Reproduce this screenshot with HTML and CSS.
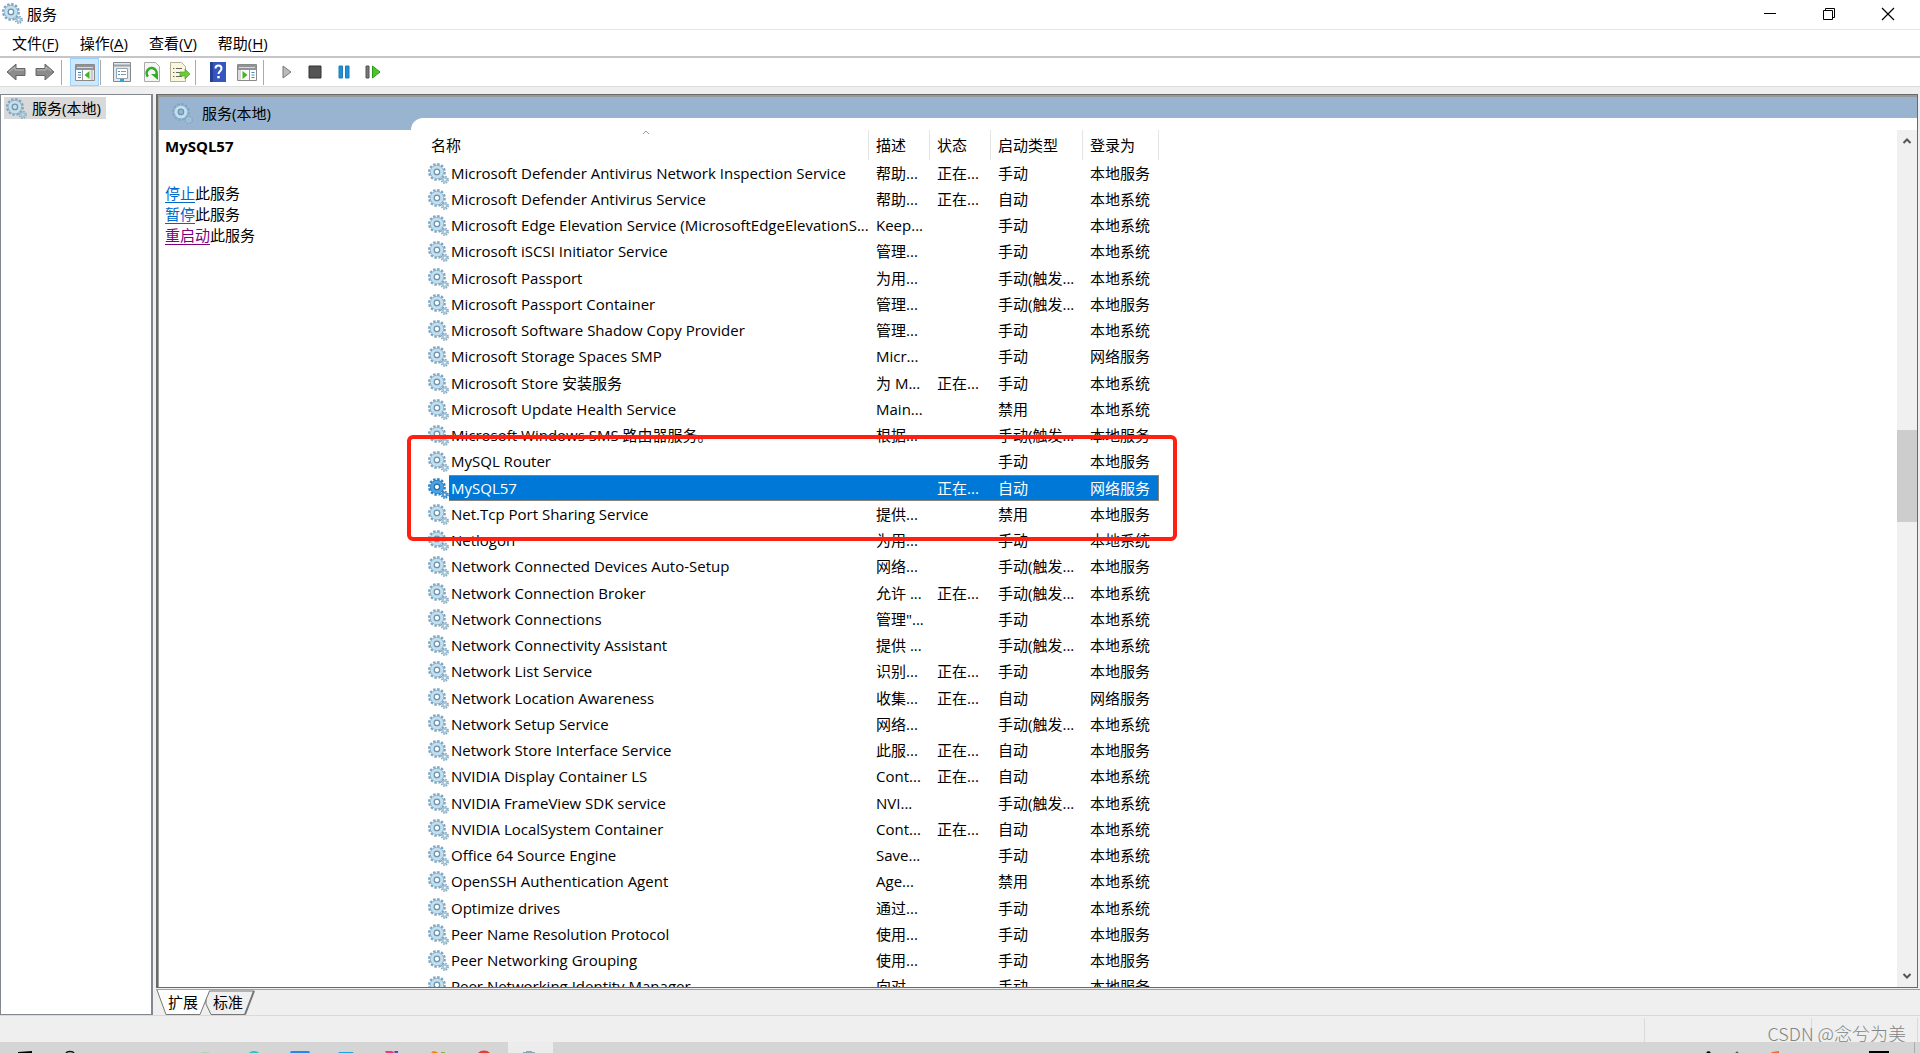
FILE: index.html
```html
<!DOCTYPE html>
<html lang="zh-CN">
<head>
<meta charset="utf-8">
<title>服务</title>
<link rel="stylesheet" href="styles.css">
</head>
<body>
<svg class="defs" aria-hidden="true">
  <symbol id="gear" viewBox="0 0 20 20">
    <circle class="g-teeth" cx="8.500" cy="8.500" r="7.300" fill="none" stroke-width="2.400" stroke-dasharray="2.300 1.522"/>
    <circle class="g-edge" cx="8.500" cy="8.500" r="4.500" fill="none" stroke-width="4.600"/>
    <circle class="g-body" cx="8.500" cy="8.500" r="4.300" fill="none" stroke-width="3.400"/>
    <circle class="g-ring" cx="8.500" cy="8.500" r="2.600" fill="none" stroke-width="1.200"/>
    <circle class="g-teeth" cx="16" cy="16" r="3.100" fill="none" stroke-width="1.600" stroke-dasharray="1.400 1.035"/>
    <circle class="g-small" cx="16" cy="16" r="1.800" fill="none" stroke-width="1.800"/>
  </symbol>
</svg>
<div class="window">
  <header class="titlebar">
    <svg class="gear"><use href="#gear"/></svg>
    <h1>服务</h1>
    <div class="winbtns">
      <button aria-label="最小化"><svg width="14" height="14"><path d="M1 6.500h12" stroke="#000"/></svg></button>
      <button aria-label="还原"><svg width="14" height="14" fill="none" stroke="#000"><path d="M1.500 3.500h9v9h-9zM3.500 3.500v-2h9v9h-2"/></svg></button>
      <button aria-label="关闭"><svg width="14" height="14" stroke="#000" stroke-width="1.200"><path d="M1 1l12 12M13 1L1 13"/></svg></button>
    </div>
  </header>
  <nav class="menubar">
    <button>文件(<u>F</u>)</button><button>操作(<u>A</u>)</button><button>查看(<u>V</u>)</button><button>帮助(<u>H</u>)</button>
  </nav>
  <div class="toolbar">
    <button class="t29" aria-label="后退"><svg width="20" height="18"><path d="M1 9L10 1v4.500h9v7h-9V17z" fill="#8b8b8b" stroke="#666"/><path d="M3 9l6-5v3h9" fill="none" stroke="#bbb"/></svg></button>
    <button class="t29" aria-label="前进"><svg width="20" height="18"><path d="M19 9L10 1v4.500H1v7h9V17z" fill="#8b8b8b" stroke="#666"/><path d="M2 7h9V4l5 4" fill="none" stroke="#bbb"/></svg></button>
    <i class="sep"></i>
    <button class="t29 on" aria-label="显示/隐藏控制台树"><svg width="20" height="18"><path d="M.5 1.500h19v16H.5z" fill="#fff" stroke="#8a8a8a"/><path d="M1 2h18v5H1z" fill="#8f9499"/><path d="M2 4.500h16" stroke="#d5d9dc"/><path d="M7.500 7v10" stroke="#999"/><path d="M3 9.500h3M3 12h3M3 14.500h3" stroke="#3f86c4"/><path d="M14.500 8v8L9.500 12z" fill="#42b521"/><path d="M15.500 7h3v10h-3z" fill="#ccc"/></svg></button>
    <i class="sep"></i>
    <button class="t33" aria-label="属性"><svg width="20" height="20"><path d="M1.500.500h17v19h-17z" fill="#e4e8eb" stroke="#83898f"/><path d="M2 3.500h16" stroke="#9aa0a5" stroke-width="2"/><path d="M4.500 6.500h11v10h-11z" fill="#fff" stroke="#92a5b3"/><path d="M6 9.500h2M6 12.500h2" stroke="#2f95d3"/><path d="M9 9.500h5M9 12.500h5" stroke="#8b969e"/><path d="M8 18h4" stroke="#24a7e0" stroke-width="2"/></svg></button>
    <button class="t28" aria-label="刷新"><svg width="20" height="20"><path d="M2.500.500h11l4 4v15h-15z" fill="#f5f5f1" stroke="#aaa"/><path d="M6 14.500a5 5 0 1 1 8-1" fill="none" stroke="#34ab2d" stroke-width="2.600"/><path d="M9 12h7v6z" fill="#34ab2d"/></svg></button>
    <button class="t28" aria-label="导出列表"><svg width="22" height="20"><path d="M1.500.500h11l4 4v15h-15z" fill="#fbf7dc" stroke="#b5ae95"/><path d="M4 6.500h1.500M4 10.500h1.500M4 14.500h1.500M7 6.500h6M7 10.500h6M7 14.500h6" stroke="#666"/><path d="M11 10h5V7l5 5-5 5v-3h-5z" fill="#6dcb3b" stroke="#48a424" stroke-width=".7"/></svg></button>
    <i class="sep"></i>
    <button class="t29" aria-label="帮助"><svg width="18" height="20"><path d="M1 0h16v20H1z" fill="#3556bd"/><path d="M1 0h3v20H1z" fill="#25409a"/><path d="M6.500 6.500c0-4 6-4 6 0 0 2.700-3 2.700-3 5.500" fill="none" stroke="#fff" stroke-width="2"/><path d="M8.300 14h2.400v2.300H8.300z" fill="#fff"/></svg></button>
    <button class="t29" aria-label="显示/隐藏操作窗格"><svg width="20" height="18"><path d="M.5 1.500h19v16H.5z" fill="#fff" stroke="#8a8a8a"/><path d="M1 2h18v5H1z" fill="#8f9499"/><path d="M2 4.500h16" stroke="#d5d9dc"/><path d="M12.500 7v10" stroke="#999"/><path d="M14.500 9.500h3M14.500 12h3M14.500 14.500h3" stroke="#3f86c4"/><path d="M5.500 8v8l5-4z" fill="#42b521"/><path d="M1 7h3v10H1z" fill="#ddd"/></svg></button>
    <i class="sep wide"></i>
    <button class="t28" aria-label="启动服务"><svg width="10" height="14"><path d="M1 1v12l8-6z" fill="#bbb" stroke="#777"/></svg></button>
    <button class="t28" aria-label="停止服务"><svg width="14" height="14"><path d="M1 1h12v12H1z" fill="#555" stroke="#333"/></svg></button>
    <button class="t29" aria-label="暂停服务"><svg width="12" height="14"><path d="M1 1h3.500v12H1zM7.500 1H11v12H7.500z" fill="#1c91dc" stroke="#2379b5"/></svg></button>
    <button class="t29" aria-label="重启动服务"><svg width="16" height="14"><path d="M1 1h3v12H1z" fill="#777" stroke="#555"/><path d="M7.500 1v12l7.500-6z" fill="#4cc52c" stroke="#2c9b1a"/></svg></button>
  </div>
  <main class="panes">
    <aside class="tree"><span class="node"><svg class="gear"><use href="#gear"/></svg>服务(本地)</span></aside>
    <div class="right">
      <div class="snap">
        <section class="detail">
          <h2><svg class="gear"><use href="#gear"/></svg>服务(本地)</h2>
          <h3>MySQL57</h3>
          <p><a href="#stop">停止</a>此服务</p>
          <p><a href="#pause">暂停</a>此服务</p>
          <p><a href="#restart" class="seen">重启动</a>此服务</p>
        </section>
        <section class="listwrap">
          <div class="list">
            <svg class="sort" width="8" height="5"><path d="M1 4l3-3 3 3" fill="none" stroke="#999"/></svg>
            <div class="rows">
            <table>
              <colgroup><col class="c-icon"><col class="c-name"><col class="c-desc"><col class="c-desc"><col class="c-type"><col class="c-log"></colgroup>
              <thead><tr><th colspan="2">名称</th><th>描述</th><th>状态</th><th>启动类型</th><th>登录为</th></tr></thead>
              <tbody>
<tr><td><svg class="gear"><use href="#gear"/></svg></td><td>Microsoft Defender Antivirus Network Inspection Service</td><td>帮助...</td><td>正在...</td><td>手动</td><td>本地服务</td></tr>
<tr><td><svg class="gear"><use href="#gear"/></svg></td><td>Microsoft Defender Antivirus Service</td><td>帮助...</td><td>正在...</td><td>自动</td><td>本地系统</td></tr>
<tr><td><svg class="gear"><use href="#gear"/></svg></td><td>Microsoft Edge Elevation Service (MicrosoftEdgeElevationS...</td><td>Keep...</td><td></td><td>手动</td><td>本地系统</td></tr>
<tr><td><svg class="gear"><use href="#gear"/></svg></td><td>Microsoft iSCSI Initiator Service</td><td>管理...</td><td></td><td>手动</td><td>本地系统</td></tr>
<tr><td><svg class="gear"><use href="#gear"/></svg></td><td>Microsoft Passport</td><td>为用...</td><td></td><td>手动(触发...</td><td>本地系统</td></tr>
<tr><td><svg class="gear"><use href="#gear"/></svg></td><td>Microsoft Passport Container</td><td>管理...</td><td></td><td>手动(触发...</td><td>本地服务</td></tr>
<tr><td><svg class="gear"><use href="#gear"/></svg></td><td>Microsoft Software Shadow Copy Provider</td><td>管理...</td><td></td><td>手动</td><td>本地系统</td></tr>
<tr><td><svg class="gear"><use href="#gear"/></svg></td><td>Microsoft Storage Spaces SMP</td><td>Micr...</td><td></td><td>手动</td><td>网络服务</td></tr>
<tr><td><svg class="gear"><use href="#gear"/></svg></td><td>Microsoft Store 安装服务</td><td>为 M...</td><td>正在...</td><td>手动</td><td>本地系统</td></tr>
<tr><td><svg class="gear"><use href="#gear"/></svg></td><td>Microsoft Update Health Service</td><td>Main...</td><td></td><td>禁用</td><td>本地系统</td></tr>
<tr><td><svg class="gear"><use href="#gear"/></svg></td><td>Microsoft Windows SMS 路由器服务。</td><td>根据...</td><td></td><td>手动(触发...</td><td>本地服务</td></tr>
<tr><td><svg class="gear"><use href="#gear"/></svg></td><td>MySQL Router</td><td></td><td></td><td>手动</td><td>本地服务</td></tr>
<tr class="sel"><td><svg class="gear"><use href="#gear"/></svg></td><td>MySQL57</td><td></td><td>正在...</td><td>自动</td><td>网络服务</td></tr>
<tr><td><svg class="gear"><use href="#gear"/></svg></td><td>Net.Tcp Port Sharing Service</td><td>提供...</td><td></td><td>禁用</td><td>本地服务</td></tr>
<tr><td><svg class="gear"><use href="#gear"/></svg></td><td>Netlogon</td><td>为用...</td><td></td><td>手动</td><td>本地系统</td></tr>
<tr><td><svg class="gear"><use href="#gear"/></svg></td><td>Network Connected Devices Auto-Setup</td><td>网络...</td><td></td><td>手动(触发...</td><td>本地服务</td></tr>
<tr><td><svg class="gear"><use href="#gear"/></svg></td><td>Network Connection Broker</td><td>允许 ...</td><td>正在...</td><td>手动(触发...</td><td>本地系统</td></tr>
<tr><td><svg class="gear"><use href="#gear"/></svg></td><td>Network Connections</td><td>管理"...</td><td></td><td>手动</td><td>本地系统</td></tr>
<tr><td><svg class="gear"><use href="#gear"/></svg></td><td>Network Connectivity Assistant</td><td>提供 ...</td><td></td><td>手动(触发...</td><td>本地系统</td></tr>
<tr><td><svg class="gear"><use href="#gear"/></svg></td><td>Network List Service</td><td>识别...</td><td>正在...</td><td>手动</td><td>本地服务</td></tr>
<tr><td><svg class="gear"><use href="#gear"/></svg></td><td>Network Location Awareness</td><td>收集...</td><td>正在...</td><td>自动</td><td>网络服务</td></tr>
<tr><td><svg class="gear"><use href="#gear"/></svg></td><td>Network Setup Service</td><td>网络...</td><td></td><td>手动(触发...</td><td>本地系统</td></tr>
<tr><td><svg class="gear"><use href="#gear"/></svg></td><td>Network Store Interface Service</td><td>此服...</td><td>正在...</td><td>自动</td><td>本地服务</td></tr>
<tr><td><svg class="gear"><use href="#gear"/></svg></td><td>NVIDIA Display Container LS</td><td>Cont...</td><td>正在...</td><td>自动</td><td>本地系统</td></tr>
<tr><td><svg class="gear"><use href="#gear"/></svg></td><td>NVIDIA FrameView SDK service</td><td>NVI...</td><td></td><td>手动(触发...</td><td>本地系统</td></tr>
<tr><td><svg class="gear"><use href="#gear"/></svg></td><td>NVIDIA LocalSystem Container</td><td>Cont...</td><td>正在...</td><td>自动</td><td>本地系统</td></tr>
<tr><td><svg class="gear"><use href="#gear"/></svg></td><td>Office 64 Source Engine</td><td>Save...</td><td></td><td>手动</td><td>本地系统</td></tr>
<tr><td><svg class="gear"><use href="#gear"/></svg></td><td>OpenSSH Authentication Agent</td><td>Age...</td><td></td><td>禁用</td><td>本地系统</td></tr>
<tr><td><svg class="gear"><use href="#gear"/></svg></td><td>Optimize drives</td><td>通过...</td><td></td><td>手动</td><td>本地系统</td></tr>
<tr><td><svg class="gear"><use href="#gear"/></svg></td><td>Peer Name Resolution Protocol</td><td>使用...</td><td></td><td>手动</td><td>本地服务</td></tr>
<tr><td><svg class="gear"><use href="#gear"/></svg></td><td>Peer Networking Grouping</td><td>使用...</td><td></td><td>手动</td><td>本地服务</td></tr>
<tr><td><svg class="gear"><use href="#gear"/></svg></td><td>Peer Networking Identity Manager</td><td>向对...</td><td></td><td>手动</td><td>本地服务</td></tr>
              </tbody>
            </table>
            </div>
            <div class="scroll">
              <button aria-label="向上滚动"><svg width="10" height="8"><path d="M1.500 6L5 2.500 8.500 6" fill="none" stroke="#555" stroke-width="2"/></svg></button>
              <div class="track"><div class="thumb"></div></div>
              <button aria-label="向下滚动"><svg width="10" height="8"><path d="M1.500 2L5 5.500 8.500 2" fill="none" stroke="#555" stroke-width="2"/></svg></button>
            </div>
            <div class="mark"></div>
          </div>
        </section>
      </div>
      <div class="tabs">
        <svg class="tabshape" width="100" height="26"><path d="M50 1h48l-9 23.500H55L50 14z" fill="#efefef" stroke="#777"/><path d="M98 1l-9 23.500" stroke="#777" stroke-width="2"/><path d="M1 0l9 24.500h34L53.500 0z" fill="#fff"/><path d="M1 0l9 24.500h34L53.500 1" fill="none" stroke="#777"/></svg>
        <button>扩展</button><button>标准</button>
      </div>
    </div>
  </main>
  <footer class="status"><span></span><span></span><span></span><div class="credit">CSDN @念兮为美</div></footer>
  <div class="taskbar">
    <div class="active"></div>
    <svg class="apps" width="560" height="11"><path d="M18 10l14-1v2H18z" fill="#000"/><path d="M66 11c1-2 7-2 8 0" fill="none" stroke="#111" stroke-width="1.500"/><path d="M201 10h8v1h-8z" fill="#b5cfb8"/><circle cx="254" cy="17" r="8" fill="#2cc1cb"/><rect x="290" y="9" width="20" height="8" rx="2" fill="#2387f5"/><rect x="338" y="10" width="16" height="6" rx="2" fill="#1ba3e6"/><path d="M385 9h7l3 2h-9z" fill="#f03a76"/><path d="M394 9h4v2h-3z" fill="#5542d8"/><path d="M433 9l4 1 1 1h-7z" fill="#fb7b13"/><path d="M441 10h4v1h-4z" fill="#7fb842"/><circle cx="484" cy="17" r="8.500" fill="#eb3a36"/><path d="M523 11v-1h3V9h6v1h3v1z" fill="#87a8bd"/></svg>
    <svg class="tray" width="220" height="11"><path d="M7 11a2 2 0 0 1 3 0" stroke="#000" stroke-width="2" fill="none"/><circle cx="37" cy="11" r="1.500" fill="#555"/><path d="M72 10l7-1v2h-8z" fill="#f66b36"/><path d="M169 9h20v2h-20z" fill="#000"/><path d="M214.500 0v11" stroke="#aaa"/></svg>
  </div>
</div>
</body>
</html>
```
FILE: styles.css
```css
* { box-sizing: border-box; }
body { margin: 0; font: 15px/20px "Open Sans", "Noto Sans CJK SC", sans-serif; color: #000; background: #efefef; }
button { border: 0; padding: 0; background: none; font: inherit; color: inherit; }
h1, h2, h3, p { margin: 0; font-size: 15px; font-weight: 400; }
svg { display: block; }
.defs { position: absolute; width: 0; height: 0; }
.gear { width: 21px; height: 21px; flex: none; --teeth: #7fa5bf; --edge: #8db4cd; --body: #c3e0f0; --ring: #6f94ad; --small: #a3c3d6; }
.sel .gear { --teeth: #2f82c4; --edge: #2f82c4; --body: #4ea3e0; --ring: #2370ae; --small: #4596d2; }
.g-teeth { stroke: var(--teeth); }
.g-edge { stroke: var(--edge); }
.g-body { stroke: var(--body); }
.g-ring { stroke: var(--ring); }
.g-small { stroke: var(--small); }

.window { height: 100vh; display: flex; flex-direction: column; overflow: hidden; }
.titlebar { flex: none; height: 30px; display: flex; align-items: center; gap: 4px; padding: 0 3px 2px 2px; background: #fff; border-bottom: 1px solid #e5e5e5; }
.winbtns { margin-left: auto; display: flex; }
.winbtns button { width: 59px; height: 27px; display: grid; place-items: center; }
.menubar { flex: none; height: 28px; display: flex; gap: 21px; padding: 0 12px 1px; background: #fff; border-bottom: 2px solid #c6c6ca; }
.menubar u { text-underline-offset: 2px; }
.toolbar { flex: none; height: 29px; display: flex; align-items: center; padding-left: 1px; background: #fff; border-bottom: 1px solid #dcdcdc; }
.toolbar button { height: 28px; display: grid; place-items: center; }
.t28 { width: 28px; }
.t29 { width: 29px; }
.t33 { width: 33px; }
.toolbar .on { background: #cce8ff; border: 1px solid #99d1ff; }
.sep { width: 1px; height: 25px; background: #aaa; margin: 0 8px 0 2px; }
.on + .sep { margin: 0 4px 0 1px; }
.t28 + .sep { margin: 0 7px 0 1px; }
.sep.wide { margin: 0 9px 0 2px; }

.panes { flex: 1; min-height: 0; display: flex; gap: 3px; padding-top: 7px; }
.tree { width: 153px; flex: none; background: #fff; border: 1px solid #828790; border-width: 1px 2px 1px 1px; padding: 2px 3px; }
.node { display: inline-flex; align-items: center; gap: 5px; height: 22px; padding: 0 5px 0 2px; background: #d9d9d9; white-space: nowrap; }
.right { flex: 1; min-width: 0; display: flex; flex-direction: column; }
.snap { flex: 1; min-height: 0; display: flex; margin-right: 2px; background: #fff; border: 1px solid #696969; border-width: 1px 1px 1px 2px; }
.detail { width: 253px; flex: none; border-left: 1px solid #a0a0a0; }
.detail h2 { display: flex; align-items: center; gap: 9px; height: 35px; padding: 0 0 1px 13px; background: #99b4d1; border-top: 2px solid #999; }
.detail h3 { font-weight: 700; padding: 6px 6px 27px; }
.detail p { padding-left: 6px; line-height: 21px; }
.detail a { color: #0066cc; text-underline-offset: 3px; }
.detail a.seen { color: #800080; }
.listwrap { flex: 1; min-width: 0; padding-top: 21px; background: #99b4d1; border-top: 2px solid #999; display: flex; }
.list { flex: 1; min-width: 0; position: relative; display: flex; background: #fff; border-top-left-radius: 12px; padding: 12px 0 0 17px; }
.sort { position: absolute; left: 231px; top: 12px; }
.rows { flex: 1; min-width: 0; overflow: hidden; }
table { table-layout: fixed; width: 731px; border-spacing: 0; border-collapse: separate; }
.c-icon { width: 21px; }
.c-name { width: 420px; }
.c-desc { width: 61px; }
.c-type { width: 92px; }
.c-log { width: 76px; }
th { height: 30px; padding: 0 0 0 7px; text-align: left; font-weight: 400; border-right: 1px solid #e5e5e5; }
th:first-child { padding-left: 3px; }
td { height: 26px; padding: 0 0 1px 7px; white-space: nowrap; }
tr:nth-child(4n) td { height: 27px; }
td:first-child { padding: 0; }
td:nth-child(2) { padding-left: 2px; }
.sel td { background: #0078d7; color: #fff; box-shadow: inset 0 1px #8a8378, inset 0 -1px #8a8378; }
.sel td:first-child { background: none; box-shadow: none; }
.sel td:last-child { box-shadow: inset 0 1px #8a8378, inset -1px -1px #8a8378; }
.scroll { width: 20px; flex: none; display: flex; flex-direction: column; background: #f0f0f0; }
.scroll button { height: 22px; display: grid; place-items: center; }
.track { flex: 1; padding-top: 278px; }
.thumb { height: 92px; background: #cdcdcd; }
.mark { position: absolute; left: -4px; top: 317px; width: 770px; height: 106px; border: 4px solid #ff2012; border-radius: 6px; }

.tabs { flex: none; height: 26px; position: relative; display: flex; margin-top: 1px; padding-left: 12px; gap: 15px; border-top: 1px solid #a0a0a0; }
.tabs button { position: relative; height: 23px; width: 30px; }
.tabshape { position: absolute; left: 0; top: 0; }

.status { flex: none; height: 27px; position: relative; display: flex; justify-content: flex-end; border-top: 1px solid #d9d9d9; padding: 2px 2px 0 0; }
.status span { width: 167px; border-left: 1px solid #d9d9d9; }
.status span:nth-child(2) { width: 106px; }
.status span:nth-child(3) { width: 1px; }
.credit { position: absolute; right: 14px; top: 5px; font: 300 18px/24px "Noto Sans CJK SC", sans-serif; color: #858585; white-space: nowrap; }
.taskbar { flex: none; height: 11px; position: relative; background: #d5d5d5; overflow: hidden; }
.active { position: absolute; left: 508px; width: 45px; height: 11px; background: #ececec; }
.apps { position: absolute; left: 0; top: 0; }
.tray { position: absolute; right: 0; top: 0; }
```
